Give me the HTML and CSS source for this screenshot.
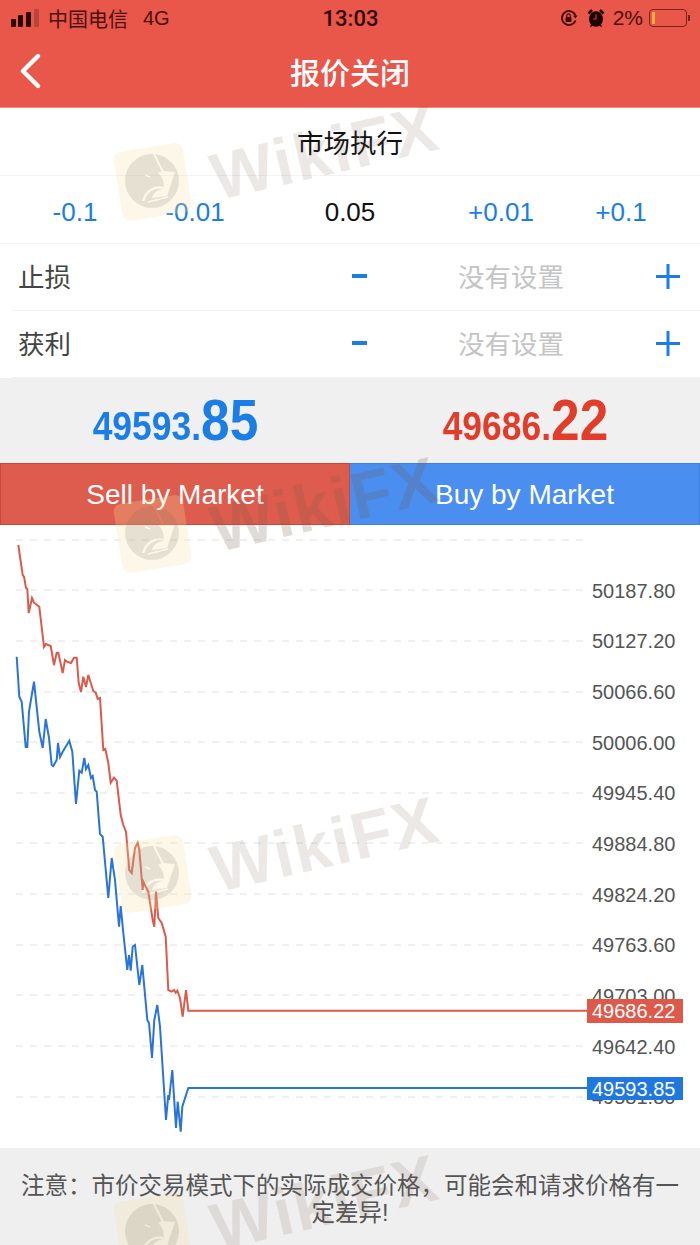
FILE: index.html
```html
<!DOCTYPE html>
<html>
<head>
    <title>报价关闭</title>
    <link rel="stylesheet" href="styles.css">
</head>
<body>
    <div class="page">
        <header class="top">
            <div class="status">
                <div class="status-left">
                    <svg class="signal" width="30" height="20" viewBox="0 0 30 20">
                        <rect x="0" y="11" width="5" height="8" rx="1" fill="#2a0705"/>
                        <rect x="7" y="7" width="5" height="12" rx="1" fill="#2a0705"/>
                        <rect x="15" y="4" width="5" height="15" rx="1" fill="#2a0705"/>
                        <rect x="23" y="1" width="5" height="18" rx="1" fill="#b8443a"/>
                    </svg>
                    <span>中国电信</span>
                    <span class="net">4G</span>
                </div>
                <div class="clock">13:03</div>
                <div class="status-right">
                    <svg width="18" height="18" viewBox="0 0 18 18">
                        <path d="M15.5 11.5A7 7 0 1 1 15.5 6.5" fill="none" stroke="#3a0b08" stroke-width="1.8"/>
                        <path d="M13 6.5h4.6l-2.3 3z" fill="#3a0b08"/>
                        <rect x="5.5" y="8" width="6" height="5" rx="1" fill="#3a0b08"/>
                        <path d="M6.8 8V6.5a1.7 1.7 0 0 1 3.4 0V8" fill="none" stroke="#3a0b08" stroke-width="1.2"/>
                    </svg>
                    <svg class="alarm" width="18" height="20" viewBox="0 0 18 20">
                        <ellipse cx="9" cy="11" rx="7" ry="7.8" fill="#1c0503"/>
                        <path d="M1.5 5.5L5 2M16.5 5.5L13 2" stroke="#1c0503" stroke-width="2.6"/>
                        <path d="M3.5 18.5l2-2M14.5 18.5l-2-2" stroke="#1c0503" stroke-width="1.6"/>
                        <path d="M9 6.5V11H6" fill="none" stroke="#b8443a" stroke-width="1.2"/>
                    </svg>
                    <span class="pct">2%</span>
                    <div class="battery"><div class="battery-level"></div></div>
                    <div class="battery-nub"></div>
                </div>
            </div>
            <div class="nav">
                <svg class="back" width="24" height="36" viewBox="0 0 24 36">
                    <path d="M20 3L5 18l15 15" fill="none" stroke="#fff" stroke-width="4.4" stroke-linecap="round" stroke-linejoin="round"/>
                </svg>
                <h1>报价关闭</h1>
            </div>
        </header>

        <div class="mode">市场执行</div>

        <div class="stepper">
            <span class="step">-0.1</span>
            <span class="step">-0.01</span>
            <span class="volume">0.05</span>
            <span class="step">+0.01</span>
            <span class="step">+0.1</span>
        </div>

        <div class="order-row">
            <span class="order-label">止损</span>
            <span class="minus"></span>
            <span class="unset">没有设置</span>
            <svg class="plus" width="24" height="25" viewBox="0 0 24 25"><path d="M12 0v25M0 12.5h24" stroke="#1a7ee6" stroke-width="3"/></svg>
        </div>
        <div class="order-row">
            <span class="order-label">获利</span>
            <span class="minus"></span>
            <span class="unset">没有设置</span>
            <svg class="plus" width="24" height="25" viewBox="0 0 24 25"><path d="M12 0v25M0 12.5h24" stroke="#1a7ee6" stroke-width="3"/></svg>
        </div>

        <div class="quotes">
            <div class="quote sell-price">49593.<b>85</b></div>
            <div class="quote buy-price">49686.<b>22</b></div>
        </div>

        <div class="actions">
            <button class="sell">Sell by Market</button>
            <button class="buy">Buy by Market</button>
        </div>

        <div class="chart">
            <svg width="700" height="623" viewBox="0 525 700 623">
                <g class="grid">
                    <line x1="16" y1="540" x2="590" y2="540"/>
                    <line x1="16" y1="590" x2="590" y2="590"/>
                    <line x1="16" y1="641" x2="590" y2="641"/>
                    <line x1="16" y1="692" x2="590" y2="692"/>
                    <line x1="16" y1="742" x2="590" y2="742"/>
                    <line x1="16" y1="793" x2="590" y2="793"/>
                    <line x1="16" y1="843" x2="590" y2="843"/>
                    <line x1="16" y1="894" x2="590" y2="894"/>
                    <line x1="16" y1="945" x2="590" y2="945"/>
                    <line x1="16" y1="995" x2="590" y2="995"/>
                    <line x1="16" y1="1046" x2="590" y2="1046"/>
                    <line x1="16" y1="1097" x2="590" y2="1097"/>
                </g>
                <g class="axis">
                    <text x="592" y="598">50187.80</text>
                    <text x="592" y="648">50127.20</text>
                    <text x="592" y="699">50066.60</text>
                    <text x="592" y="750">50006.00</text>
                    <text x="592" y="800">49945.40</text>
                    <text x="592" y="851">49884.80</text>
                    <text x="592" y="902">49824.20</text>
                    <text x="592" y="952">49763.60</text>
                    <text x="592" y="1003">49703.00</text>
                    <text x="592" y="1054">49642.40</text>
                    <text x="592" y="1104">49581.80</text>
                </g>
                <polyline class="ask-line" points="18.3,545 22.7,575 24,576.7 26,588 27.3,589 28.7,613 32,598 34,602.7 39.3,606.7 44,647 46,644 50.7,646 54,665 56.7,652.7 58.3,652.7 62.7,673 65,660 67.7,662 71,663 74,657.7 76.7,657.7 78.7,683 81,692 83.3,676.7 86,687 88.3,675 93.3,691 95.7,692.7 97.7,699 100,698 103.3,750 105.3,749 108.3,763 110.7,782.7 114,777.7 116.7,780.7 120.7,815 123.3,825 126,831.7 129.3,870 131.7,873 135,848 137.7,842.7 139.3,850 142.7,890 143.3,881.7 148.3,891.7 152.7,920 154.3,926.7 156,891.7 158.3,918 161.7,923 165.7,936.7 168.3,990 171.7,991.7 174,990 175.7,992.7 177.3,990.7 180,998 182.7,1016.7 186,990 188.3,1010.7 590,1010.7"/>
                <polyline class="bid-line" points="16.7,656.7 19.3,696.7 21.7,701.7 25.7,747 27.3,747 29,711.7 34,681.7 39.3,731.7 42.7,748 45.7,719 49,738 51.7,765 53.3,766 56.7,760 58,743 60,757 62.7,751.7 69.3,740.7 72.3,751.7 76,804 79.3,770.7 81.7,772.7 84.3,758 86,769 88.3,765 91,778 92.7,776 95,790 96.7,791.7 100,834 102.7,836.7 108.3,898 111.7,858 115,880 119,926.7 120.7,906 123.3,933 127.3,970 129,955 130.7,970.7 132.7,946.7 135,945 139.3,985 142.3,965 147.3,1020 149,1023 152,1058 154.3,1020 157.3,1005 160,1026.7 166,1120 168.3,1095 169,1100 172.3,1070 176,1128 177.7,1101.7 180.7,1131.7 182.3,1106.7 188.3,1088 590,1088"/>
                <rect class="tag-ask" x="587" y="999" width="96" height="24"/>
                <text class="tag-text" x="592" y="1018">49686.22</text>
                <rect class="tag-bid" x="587" y="1077" width="96" height="23"/>
                <text class="tag-text" x="592" y="1096">49593.85</text>
            </svg>
        </div>

        <div class="note">注意：市价交易模式下的实际成交价格，可能会和请求价格有一定差异!</div>

        <!-- watermarks lie over everything -->
        <div class="mark mark-1">
            <svg class="mark-logo" width="84" height="84" viewBox="0 0 84 84"><use href="#eagle"/></svg>
            <span class="mark-text">WikiFX</span>
        </div>
        <div class="mark mark-2">
            <svg class="mark-logo" width="84" height="84" viewBox="0 0 84 84"><use href="#eagle"/></svg>
            <span class="mark-text">WikiFX</span>
        </div>
        <div class="mark mark-3">
            <svg class="mark-logo" width="84" height="84" viewBox="0 0 84 84"><use href="#eagle"/></svg>
            <span class="mark-text">WikiFX</span>
        </div>
        <div class="mark mark-4">
            <svg class="mark-logo" width="84" height="84" viewBox="0 0 84 84"><use href="#eagle"/></svg>
            <span class="mark-text">WikiFX</span>
        </div>

        <svg class="defs" width="0" height="0">
            <mask id="disc-cut" maskUnits="userSpaceOnUse" x="0" y="0" width="84" height="84">
                <rect width="84" height="84" fill="#fff"/>
                <path d="M52 32L65 33L57 57L42 59C43 54 47 51 53 50C55 46 53 38 48 34Z" fill="#000"/>
                <g fill="none" stroke="#000">
                    <path d="M44 15L53 33" stroke-width="1.8"/>
                    <path d="M58 58L38 63" stroke-width="1.8"/>
                    <path d="M53 49C44 47 36 52 33 62" stroke-width="2.4"/>
                    <path d="M35 36L40 38" stroke-width="1.6"/>
                </g>
            </mask>
            <symbol id="eagle" viewBox="0 0 84 84">
                <rect x="7.7" y="8" width="70" height="70" rx="8" transform="rotate(-9 42.7 43)" fill="#f7dfa0" fill-opacity=".25"/>
                <circle cx="42" cy="42" r="27" fill="#6e6a66" fill-opacity=".16" mask="url(#disc-cut)"/>
            </symbol>
        </svg>
    </div>
</body>
</html>
```
FILE: styles.css
```css
* {
    box-sizing: border-box;
}
html, body {
    margin: 0;
    padding: 0;
}
body {
    font-family: "Liberation Sans", "Noto Sans CJK SC", sans-serif;
    background-color: white;
}
.page {
    position: relative;
    width: 700px;
    height: 1245px;
    display: flex;
    flex-direction: column;
    overflow: hidden;
}
.top {
    height: 108px;
    background-color: #e9564a;
    border-bottom: 1px solid #f08a7e;
}
.status {
    height: 36px;
    display: grid;
    grid-template-columns: 1fr auto 1fr;
    align-items: center;
    padding: 0 10px 0 11px;
    color: #4a100b;
    font-size: 20px;
}
.status-left, .status-right {
    display: flex;
    align-items: center;
}
.status-left span {
    margin-left: 7px;
}
.status-left .net {
    margin-left: 15px;
    font-size: 20px;
}
.status-right {
    justify-content: flex-end;
}
.alarm {
    margin-left: 9px;
}
.clock {
    font-family: Roboto, sans-serif;
    font-size: 22px;
    font-weight: 500;
    color: #2e0806;
}
.pct {
    margin-left: 8px;
    font-size: 21px;
}
.battery {
    width: 38px;
    height: 18px;
    margin-left: 6px;
    padding: 2px;
    border: 1px solid #7a211a;
    border-radius: 4px;
}
.battery-level {
    width: 3px;
    height: 100%;
    background-color: #f4b13a;
}
.battery-nub {
    width: 2px;
    height: 6px;
    margin-left: 1px;
    background-color: #7a211a;
}
.nav {
    height: 71px;
    position: relative;
    display: flex;
    align-items: center;
    justify-content: center;
}
.back {
    position: absolute;
    left: 18px;
    top: 17px;
}
.nav h1 {
    margin: 0 0 2px;
    font-size: 30px;
    font-weight: 500;
    color: #fff;
}
.mode {
    height: 68px;
    display: flex;
    align-items: center;
    justify-content: center;
    font-size: 26.5px;
    color: #111;
    border-bottom: 1px solid #f3f3f3;
}
.stepper {
    height: 68px;
    padding-top: 6px;
    display: grid;
    grid-template-columns: 150px 90px 220px 82px 158px;
    align-items: center;
    justify-items: center;
    font-size: 26px;
    border-bottom: 1px solid #f3f3f3;
}
.step {
    color: #1a7ee6;
}
.volume {
    color: #111;
}
.order-row {
    height: 67px;
    margin-left: 12px;
    padding: 0 20px 0 6px;
    display: grid;
    grid-template-columns: 1fr 30px 282px 24px;
    align-items: center;
    font-size: 26.5px;
    border-bottom: 1px solid #f3f3f3;
}
.order-row:last-of-type {
    border-bottom: none;
}
.order-label {
    color: #444;
    margin-bottom: 4px;
}
.minus {
    justify-self: center;
    width: 15px;
    height: 4px;
    background-color: #1a7ee6;
    margin-bottom: 3px;
}
.unset {
    padding-left: 84px;
    margin-bottom: 4px;
    color: #c4c4c4;
}
.plus {
    margin-bottom: 2px;
}
.quotes {
    height: 85px;
    padding-bottom: 3px;
    display: grid;
    grid-template-columns: 1fr 1fr;
    align-items: center;
    justify-items: center;
    background-color: #f0f0f0;
}
.quote {
    font-size: 40px;
    font-weight: bold;
    transform: scaleX(0.886);
    white-space: nowrap;
}
.quote b {
    font-size: 58px;
}
.sell-price {
    color: #1a7ee6;
}
.buy-price {
    color: #e23c2a;
}
.actions {
    height: 62px;
    display: grid;
    grid-template-columns: 350px 350px;
}
.actions button {
    font-family: inherit;
    font-size: 28px;
    color: #fff;
    padding: 2px 0 0;
}
.sell {
    background-color: #de5c4d;
    border: 1px solid #c54a3d;
}
.buy {
    background-color: #4a8ef0;
    border: 1px solid #3f80e0;
    border-left: none;
}
.chart {
    height: 623px;
}
.chart svg {
    display: block;
}
.grid line {
    stroke: #ececec;
    stroke-width: 1.5;
    stroke-dasharray: 7 7;
}
.axis text {
    font-size: 20px;
    fill: #555;
}
.ask-line {
    fill: none;
    stroke: #dc5a4c;
    stroke-width: 2;
}
.bid-line {
    fill: none;
    stroke: #2a74d8;
    stroke-width: 2;
}
.tag-ask {
    fill: #dd5a4b;
}
.tag-bid {
    fill: #1f78e0;
}
.tag-text {
    font-size: 20px;
    fill: #fff;
}
.note {
    flex: 1;
    padding: 25px 20px 0;
    background-color: #efefef;
    color: #555;
    font-size: 23.5px;
    line-height: 27px;
    text-align: center;
}
.defs {
    position: absolute;
}
/* watermark: logo and name, tilted */
.mark {
    position: absolute;
    left: 110px;
    width: 350px;
    display: flex;
    align-items: center;
    pointer-events: none;
}
.mark-1 {
    top: 118px;
}
.mark-2 {
    top: 470px;
}
.mark-3 {
    top: 810px;
}
.mark-4 {
    top: 1168px;
}
.mark-logo {
    flex-shrink: 0;
    overflow: visible;
    transform: translateY(14px);
}
.mark-text {
    margin-left: 18px;
    margin-top: 22px;
    font-size: 66px;
    font-weight: bold;
    letter-spacing: 2px;
    color: rgba(120, 90, 75, 0.14);
    transform: rotate(-13deg);
    transform-origin: left center;
}
.mark-2 .mark-text {
    color: rgba(120, 90, 75, 0.22);
}
```
